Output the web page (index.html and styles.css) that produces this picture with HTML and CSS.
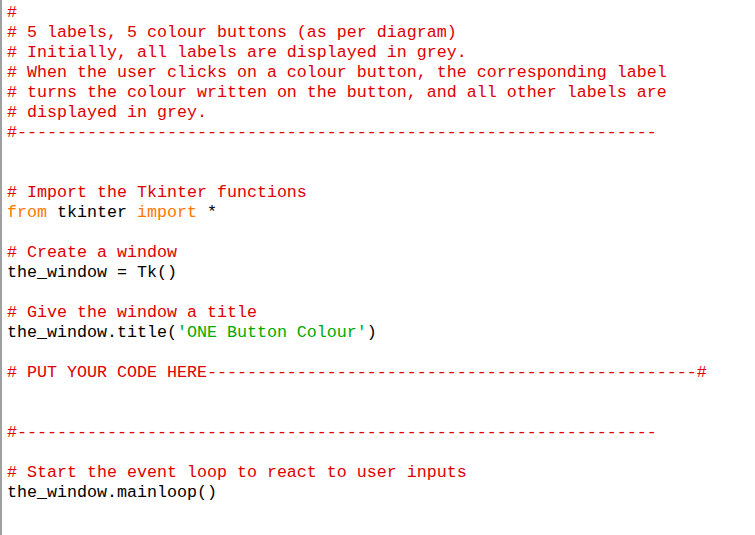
FILE: index.html
```html
<!DOCTYPE html>
<html>
<head>
<meta charset="utf-8">
<link rel="stylesheet" href="styles.css">
</head>
<body>
<div class="editor">
<pre class="code"><span class="c">#</span>
<span class="c"># 5 labels, 5 colour buttons (as per diagram)</span>
<span class="c"># Initially, all labels are displayed in grey.</span>
<span class="c"># When the user clicks on a colour button, the corresponding label</span>
<span class="c"># turns the colour written on the button, and all other labels are</span>
<span class="c"># displayed in grey.</span>
<span class="c">#----------------------------------------------------------------</span>


<span class="c"># Import the Tkinter functions</span>
<span class="k">from</span> tkinter <span class="k">import</span> *

<span class="c"># Create a window</span>
the_window = Tk()

<span class="c"># Give the window a title</span>
the_window.title(<span class="s">'ONE Button Colour'</span>)

<span class="c"># PUT YOUR CODE HERE-------------------------------------------------#</span>


<span class="c">#----------------------------------------------------------------</span>

<span class="c"># Start the event loop to react to user inputs</span>
the_window.mainloop()
</pre>
</div>
</body>
</html>
```

FILE: styles.css
```css
html, body {
  margin: 0;
  padding: 0;
  background: #ffffff;
}
.editor {
  width: 755px;
  height: 535px;
  box-sizing: border-box;
  border-left: 2px solid #a0a0a0;
  padding: 3px 0 0 5px;
  overflow: hidden;
}
.code {
  margin: 0;
  font-family: "Liberation Mono", "Courier New", monospace;
  font-size: 16.667px;
  line-height: 20px;
  color: #000000;
}
.c { color: #dd0000; }
.k { color: #ff7700; }
.s { color: #00aa00; }
```
